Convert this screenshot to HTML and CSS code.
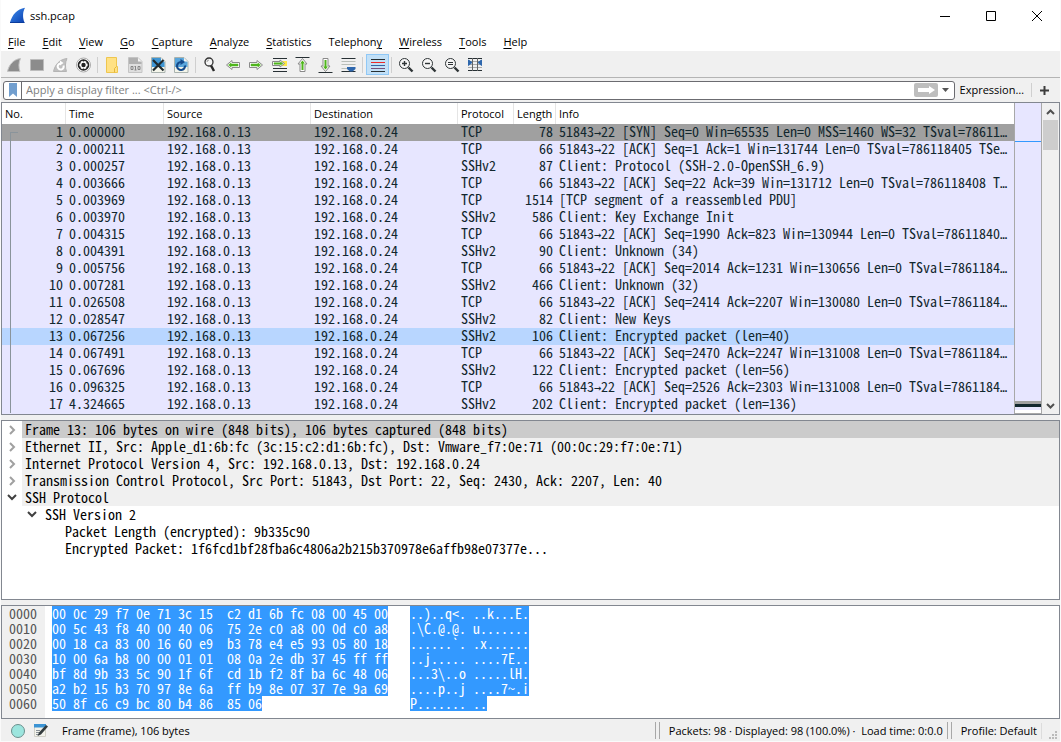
FILE: index.html
```
<!DOCTYPE html>
<html lang="en">
<head>
  <meta charset="UTF-8">
  <meta name="viewport" content="width=device-width, initial-scale=1">
  <title>ssh.pcap</title>
  <link rel="stylesheet" href="styles.css">
</head>
<body>
  <header class="titlebar">
    <svg class="logo" width="18" height="17" viewBox="0 0 18 17"><defs><linearGradient id="fin" x1="0" y1="0" x2="1" y2="1"><stop offset="0" stop-color="#3f8ff0"/><stop offset="1" stop-color="#0a3fae"/></linearGradient></defs><path d="M1 15.500C3 8 8 2 16 .8C13.500 5 13.500 11 15.500 15.500Z" fill="url(#fin)"/><path d="M1 15.500h14.500" stroke="#0b3c9c"/></svg>
    <h1>ssh.pcap</h1>
    <div class="window-buttons">
      <button aria-label="Minimize"><svg width="12" height="12" viewBox="0 0 12 12"><path d="M1 6.500h10" stroke="#000"/></svg></button>
      <button aria-label="Maximize"><svg width="12" height="12" viewBox="0 0 12 12"><path d="M1.500 1.500h9v9h-9z" fill="none" stroke="#000"/></svg></button>
      <button aria-label="Close"><svg width="12" height="12" viewBox="0 0 12 12"><path d="M1 1l10 10M11 1L1 11" stroke="#000"/></svg></button>
    </div>
  </header>

  <nav class="menubar">
    <button><u>F</u>ile</button>
    <button><u>E</u>dit</button>
    <button><u>V</u>iew</button>
    <button><u>G</u>o</button>
    <button><u>C</u>apture</button>
    <button><u>A</u>nalyze</button>
    <button><u>S</u>tatistics</button>
    <button>Telephon<u>y</u></button>
    <button><u>W</u>ireless</button>
    <button><u>T</u>ools</button>
    <button><u>H</u>elp</button>
  </nav>

  <div class="toolbar">
    <button aria-label="Start capture"><svg viewBox="0 0 16 16"><path d="M.5 14.500C2 8 6 2.500 13.500 1.500C11.500 5.500 11.500 10.500 13 14.500Z" fill="#8c8c8c" stroke="#c4c4c4"/></svg></button>
    <button aria-label="Stop capture"><svg viewBox="0 0 16 16"><path d="M.5 2.500h13v11H.5z" fill="#8c8c8c" stroke="#bcbcbc"/></svg></button>
    <button aria-label="Restart capture"><svg viewBox="0 0 16 16"><path d="M.5 14.500C2 8 6 2.500 14 1.500C12 5.500 12 10.500 13.500 14.500Z" fill="#c0c0c0" stroke="#b4b4b4"/><path d="M10.500 8.500a3 3 0 1 1-3-2" fill="none" stroke="#fff" stroke-width="2"/><path d="M7 3.500l3.500 2.500L7 8.500z" fill="#fff"/></svg></button>
    <button aria-label="Capture options"><svg viewBox="0 0 16 16"><circle cx="7.500" cy="8" r="7" fill="#fff" stroke="#aaa"/><circle cx="7.500" cy="8" r="5" fill="none" stroke="#222" stroke-width="1.600"/><circle cx="7.500" cy="8" r="2.200" fill="#222"/><path d="M7.500 3v1.500M7.500 11.500V13M3.200 5.500l1.300.7M10.500 9.800l1.300.7M11.800 5.500l-1.300.7M4.500 9.800l-1.300.7" stroke="#222" stroke-width="1.500"/></svg></button>
    <span class="separator"></span>
    <button aria-label="Open"><svg viewBox="0 0 16 16"><path d="M1.500 .5h10v9h1v6h-11z" fill="#ffe184" stroke="#eec64f"/><path d="M11.500 9.500l-2 2v4" fill="none" stroke="#e4b63b"/></svg></button>
    <button aria-label="Save"><svg viewBox="0 0 16 16"><path d="M.5 .5h9.500l4 4v11H.5z" fill="#dedede" stroke="#c4c4c4"/><path d="M1 1h8.500l4 4v2H1z" fill="#b0b0b0"/><path d="M10 1v3.500h3.500z" fill="#f4f4f4"/><path d="M3 9.500h2v3H3zM10 9.500h2v3h-2zM7.500 9v4M6.500 9.500h1M6.500 13h2" fill="none" stroke="#858585"/></svg></button>
    <button aria-label="Close file"><svg viewBox="0 0 16 16"><path d="M.5 .5h9.500l4 4v11H.5z" fill="#f4f5ea" stroke="#a9b2ae"/><path d="M1 1h8.500l4 4v5H1z" fill="#3f96d4"/><path d="M10 1v3.500h3.500z" fill="#f4f4f4"/><path d="M2 3l10.500 10.500M12.500 3L2 13.500" stroke="#202a2e" stroke-width="2.200"/></svg></button>
    <button aria-label="Reload"><svg viewBox="0 0 16 16"><path d="M.5 .5h9.500l4 4v11H.5z" fill="#f4f5ea" stroke="#a9b2ae"/><path d="M1 1h8.500l4 4v5H1z" fill="#5aa6dc"/><path d="M10 1v3.500h3.500z" fill="#f4f4f4"/><path d="M11 8.500A4 4 0 1 1 7 5" fill="none" stroke="#164a8a" stroke-width="2.200"/><path d="M6.500 2l4.500 3-4.500 3z" fill="#164a8a"/></svg></button>
    <span class="separator"></span>
    <button aria-label="Find"><svg viewBox="0 0 16 16"><circle cx="6" cy="5" r="4" fill="#f5f5f5" stroke="#333" stroke-width="1.300"/><path d="M4 5a2 2 0 0 1 2-2" fill="none" stroke="#999"/><path d="M8 8.500l3 5.500" stroke="#292929" stroke-width="2.500"/></svg></button>
    <button aria-label="Previous"><svg viewBox="0 0 16 16"><path d="M.5 8L6 3.500v2h7.500v5H6v2z" fill="#fff" stroke="#8a8a8a"/><path d="M2.500 8L5 6v1h7v2H5v1z" fill="#4fb51c" stroke="#4fb51c" stroke-width=".5"/></svg></button>
    <button aria-label="Next"><svg viewBox="0 0 16 16"><path d="M13.500 8L8 3.500v2H.5v5H8v2z" fill="#fff" stroke="#8a8a8a"/><path d="M11.500 8L9 6v1H2v2h7v1z" fill="#4fb51c" stroke="#4fb51c" stroke-width=".5"/></svg></button>
    <button aria-label="Go to packet"><svg viewBox="0 0 16 16"><path d="M1 1.500h14M1 11.500h14M1 14.500h14" stroke="#273034"/><path d="M9 4h6v5H9z" fill="#fbe646"/><path d="M12.500 6.500L8 3v1.500H.5v4H8V10z" fill="#fff" stroke="#8a8a8a"/><path d="M11 6.500L8.500 5v.8H2v1.500h6.500V8z" fill="#4fb51c" stroke="#4fb51c" stroke-width=".5"/></svg></button>
    <button aria-label="First packet"><svg viewBox="0 0 16 16"><path d="M.5 .5h14" stroke="#273034"/><path d="M7.500 1.500L3 7h2v7.500h5V7h2z" fill="#fff" stroke="#8a8a8a"/><path d="M7.500 3.500L5 6.500h1.500V13h2V6.500H10z" fill="#4fb51c"/></svg></button>
    <button aria-label="Last packet"><svg viewBox="0 0 16 16"><path d="M.5 15.500h14" stroke="#273034"/><path d="M7.500 14.500L3 9h2V1.500h5V9h2z" fill="#fff" stroke="#8a8a8a"/><path d="M7.500 12.500L5 9.500h1.500V3h2v6.500H10z" fill="#4fb51c"/></svg></button>
    <button aria-label="Auto scroll"><svg viewBox="0 0 16 16"><path d="M.5 1.500h14M.5 14.500h14" stroke="#273034"/><path d="M.5 4.500h14M.5 7.500h14M.5 11.500h7" stroke="#b9beb9"/><path d="M6 10h8.500v2l-3 2.500H9L6 12z" fill="#2e67ad"/></svg></button>
    <span class="separator"></span>
    <button class="checked" aria-label="Colorize" aria-pressed="true"><svg viewBox="0 0 16 16"><path d="M1 2.500h14M1 14.500h14" stroke="#273034"/><path d="M1 5.500h14" stroke="#ef2929"/><path d="M1 8.500h14" stroke="#3465a4"/><path d="M1 11.500h14" stroke="#75507b"/></svg></button>
    <span class="separator"></span>
    <button aria-label="Zoom in"><svg viewBox="0 0 16 16"><circle cx="5.500" cy="6.500" r="5" fill="#f6f6f6" stroke="#2e3436"/><path d="M3 6.500h5M5.500 4v5" stroke="#2e3436" stroke-width="1.400"/><path d="M9.500 10.500l4 4" stroke="#2e3436" stroke-width="2.400"/></svg></button>
    <button aria-label="Zoom out"><svg viewBox="0 0 16 16"><circle cx="5.500" cy="6.500" r="5" fill="#f6f6f6" stroke="#2e3436"/><path d="M3 6.500h5" stroke="#2e3436" stroke-width="1.400"/><path d="M9.500 10.500l4 4" stroke="#2e3436" stroke-width="2.400"/></svg></button>
    <button aria-label="Normal size"><svg viewBox="0 0 16 16"><circle cx="5.500" cy="6.500" r="5" fill="#f6f6f6" stroke="#2e3436"/><path d="M3 5.500h5M3 7.500h5" stroke="#2e3436"/><path d="M9.500 10.500l4 4" stroke="#2e3436" stroke-width="2.400"/></svg></button>
    <button aria-label="Resize columns"><svg viewBox="0 0 16 16"><path d="M0 4.500h14M0 7.500h14M0 10.500h14" stroke="#aaa"/><path d="M0 1.500h14M0 13.500h14" stroke="#273034"/><path d="M4.500 1v13M9.500 1v13" stroke="#666"/><path d="M.5 3v5.500l3.500-3zM13.500 3v5.500l-3.500-3z" fill="#2e67ad" stroke="#2e67ad"/></svg></button>
  </div>

  <div class="filterbar">
    <div class="filter">
      <button class="bookmark" aria-label="Bookmarks"><svg width="8" height="14" viewBox="0 0 8 14"><path d="M0 0h8v14L4 10.500 0 14z" fill="#729fcf"/></svg></button>
      <input type="text" aria-label="Display filter" placeholder="Apply a display filter ... &lt;Ctrl-/&gt;">
      <button class="apply" aria-label="Apply filter"><svg width="24" height="14" viewBox="0 0 24 14"><rect width="24" height="14" rx="2" fill="#bebebe"/><path d="M4 5h11V3l6 4-6 4V9H4z" fill="#fff"/></svg></button>
      <button class="recent" aria-label="Recent filters"><svg width="8" height="4" viewBox="0 0 8 4"><path d="M0 0h7L3.500 4z" fill="#555"/></svg></button>
    </div>
    <button class="expression">Expression…</button>
    <button class="add" aria-label="Add filter button"><svg width="9" height="9" viewBox="0 0 9 9"><path d="M4.500 0v9M0 4.500h9" stroke="#3c3c3c" stroke-width="2"/></svg></button>
  </div>

  <main class="panes">
    <section class="pane packets">
      <table class="packet-list">
        <colgroup><col class="c-no"><col class="c-time"><col class="c-addr"><col class="c-addr"><col class="c-proto"><col class="c-len"><col></colgroup>
        <thead>
          <tr><th>No.</th><th>Time</th><th>Source</th><th>Destination</th><th>Protocol</th><th>Length</th><th>Info</th></tr>
        </thead>
        <tbody>
          <tr class="syn"><td>1</td><td>0.000000</td><td>192.168.0.13</td><td>192.168.0.24</td><td>TCP</td><td>78</td><td>51843<i>→</i>22 [SYN] Seq=0 Win=65535 Len=0 MSS=1460 WS=32 TSval=78611<i>…</i></td></tr>
          <tr><td>2</td><td>0.000211</td><td>192.168.0.13</td><td>192.168.0.24</td><td>TCP</td><td>66</td><td>51843<i>→</i>22 [ACK] Seq=1 Ack=1 Win=131744 Len=0 TSval=786118405 TSe<i>…</i></td></tr>
          <tr><td>3</td><td>0.000257</td><td>192.168.0.13</td><td>192.168.0.24</td><td>SSHv2</td><td>87</td><td>Client: Protocol (SSH-2.0-OpenSSH_6.9)</td></tr>
          <tr><td>4</td><td>0.003666</td><td>192.168.0.13</td><td>192.168.0.24</td><td>TCP</td><td>66</td><td>51843<i>→</i>22 [ACK] Seq=22 Ack=39 Win=131712 Len=0 TSval=786118408 T<i>…</i></td></tr>
          <tr><td>5</td><td>0.003969</td><td>192.168.0.13</td><td>192.168.0.24</td><td>TCP</td><td>1514</td><td>[TCP segment of a reassembled PDU]</td></tr>
          <tr><td>6</td><td>0.003970</td><td>192.168.0.13</td><td>192.168.0.24</td><td>SSHv2</td><td>586</td><td>Client: Key Exchange Init</td></tr>
          <tr><td>7</td><td>0.004315</td><td>192.168.0.13</td><td>192.168.0.24</td><td>TCP</td><td>66</td><td>51843<i>→</i>22 [ACK] Seq=1990 Ack=823 Win=130944 Len=0 TSval=78611840<i>…</i></td></tr>
          <tr><td>8</td><td>0.004391</td><td>192.168.0.13</td><td>192.168.0.24</td><td>SSHv2</td><td>90</td><td>Client: Unknown (34)</td></tr>
          <tr><td>9</td><td>0.005756</td><td>192.168.0.13</td><td>192.168.0.24</td><td>TCP</td><td>66</td><td>51843<i>→</i>22 [ACK] Seq=2014 Ack=1231 Win=130656 Len=0 TSval=7861184<i>…</i></td></tr>
          <tr><td>10</td><td>0.007281</td><td>192.168.0.13</td><td>192.168.0.24</td><td>SSHv2</td><td>466</td><td>Client: Unknown (32)</td></tr>
          <tr><td>11</td><td>0.026508</td><td>192.168.0.13</td><td>192.168.0.24</td><td>TCP</td><td>66</td><td>51843<i>→</i>22 [ACK] Seq=2414 Ack=2207 Win=130080 Len=0 TSval=7861184<i>…</i></td></tr>
          <tr><td>12</td><td>0.028547</td><td>192.168.0.13</td><td>192.168.0.24</td><td>SSHv2</td><td>82</td><td>Client: New Keys</td></tr>
          <tr class="selected"><td>13</td><td>0.067256</td><td>192.168.0.13</td><td>192.168.0.24</td><td>SSHv2</td><td>106</td><td>Client: Encrypted packet (len=40)</td></tr>
          <tr><td>14</td><td>0.067491</td><td>192.168.0.13</td><td>192.168.0.24</td><td>TCP</td><td>66</td><td>51843<i>→</i>22 [ACK] Seq=2470 Ack=2247 Win=131008 Len=0 TSval=7861184<i>…</i></td></tr>
          <tr><td>15</td><td>0.067696</td><td>192.168.0.13</td><td>192.168.0.24</td><td>SSHv2</td><td>122</td><td>Client: Encrypted packet (len=56)</td></tr>
          <tr><td>16</td><td>0.096325</td><td>192.168.0.13</td><td>192.168.0.24</td><td>TCP</td><td>66</td><td>51843<i>→</i>22 [ACK] Seq=2526 Ack=2303 Win=131008 Len=0 TSval=7861184<i>…</i></td></tr>
          <tr><td>17</td><td>4.324665</td><td>192.168.0.13</td><td>192.168.0.24</td><td>SSHv2</td><td>202</td><td>Client: Encrypted packet (len=136)</td></tr>
        </tbody>
      </table>
      <div class="minimap">
        <span class="map-selected"></span>
        <span class="map-gray"></span>
        <span class="map-dark"></span>
        <span class="map-light"></span>
        <span class="map-end"></span>
      </div>
      <div class="scrollbar">
        <button aria-label="Scroll up"><svg width="9" height="6" viewBox="0 0 9 6"><path d="M1 5l3.500-3.500L8 5" fill="none" stroke="#505050" stroke-width="2"/></svg></button>
        <div class="thumb"></div>
        <button aria-label="Scroll down"><svg width="9" height="6" viewBox="0 0 9 6"><path d="M1 1l3.500 3.500L8 1" fill="none" stroke="#505050" stroke-width="2"/></svg></button>
      </div>
    </section>

    <section class="pane details">
      <ul class="tree">
        <li class="root current"><svg class="twisty" viewBox="0 0 10 10"><path d="M3 1l4 4-4 4" stroke="#a0a0a0"/></svg><span>Frame 13: 106 bytes on wire (848 bits), 106 bytes captured (848 bits)</span></li>
        <li class="root"><svg class="twisty" viewBox="0 0 10 10"><path d="M3 1l4 4-4 4" stroke="#a0a0a0"/></svg><span>Ethernet II, Src: Apple_d1:6b:fc (3c:15:c2:d1:6b:fc), Dst: Vmware_f7:0e:71 (00:0c:29:f7:0e:71)</span></li>
        <li class="root"><svg class="twisty" viewBox="0 0 10 10"><path d="M3 1l4 4-4 4" stroke="#a0a0a0"/></svg><span>Internet Protocol Version 4, Src: 192.168.0.13, Dst: 192.168.0.24</span></li>
        <li class="root"><svg class="twisty" viewBox="0 0 10 10"><path d="M3 1l4 4-4 4" stroke="#a0a0a0"/></svg><span>Transmission Control Protocol, Src Port: 51843, Dst Port: 22, Seq: 2430, Ack: 2207, Len: 40</span></li>
        <li class="root"><svg class="twisty" viewBox="0 0 10 10"><path d="M1 2l4 4 4-4" stroke="#404040"/></svg><span>SSH Protocol</span></li>
        <li class="level-1"><svg class="twisty" viewBox="0 0 10 10"><path d="M1 2l4 4 4-4" stroke="#404040"/></svg><span>SSH Version 2</span></li>
        <li class="level-2"><span>Packet Length (encrypted): 9b335c90</span></li>
        <li class="level-2"><span>Encrypted Packet: 1f6fcd1bf28fba6c4806a2b215b370978e6affb98e07377e...</span></li>
      </ul>
    </section>

    <section class="pane bytes">
      <div class="offsets"><span>0000</span><span>0010</span><span>0020</span><span>0030</span><span>0040</span><span>0050</span><span>0060</span></div>
      <div class="hex">
        <span>00 0c 29 f7 0e 71 3c 15  c2 d1 6b fc 08 00 45 00</span>
        <span>00 5c 43 f8 40 00 40 06  75 2e c0 a8 00 0d c0 a8</span>
        <span>00 18 ca 83 00 16 60 e9  b3 78 e4 e5 93 05 80 18</span>
        <span>10 00 6a b8 00 00 01 01  08 0a 2e db 37 45 ff ff</span>
        <span>bf 8d 9b 33 5c 90 1f 6f  cd 1b f2 8f ba 6c 48 06</span>
        <span>a2 b2 15 b3 70 97 8e 6a  ff b9 8e 07 37 7e 9a 69</span>
        <span>50 8f c6 c9 bc 80 b4 86  85 06</span>
      </div>
      <div class="hex">
        <span>..)..q&lt;. ..k...E.</span>
        <span>.\C.@.@. u.......</span>
        <span>......`. .x......</span>
        <span>..j..... ....7E..</span>
        <span>...3\..o .....lH.</span>
        <span>....p..j ....7~.i</span>
        <span>P....... ..</span>
      </div>
    </section>
  </main>

  <footer class="statusbar">
    <button aria-label="Expert information"><svg width="16" height="16" viewBox="0 0 16 16"><circle cx="8" cy="8" r="6.500" fill="#9ce5de" stroke="#6b8f8d"/></svg></button>
    <button aria-label="Capture comment"><svg width="16" height="16" viewBox="0 0 16 16"><path d="M1.500 1.500h11v12h-11z" fill="#f3f3ec" stroke="#d0d0c8"/><path d="M1 1h12v3.500H1z" fill="#3c94d4"/><path d="M3 7.500h4M3 9.500h3M3 11.500h3" stroke="#8a9299"/><path d="M13 2l2 1.500-7 8-3.500 1.500L6 9.500z" fill="#333b3e"/></svg></button>
    <span class="status-text">Frame (frame), 106 bytes</span>
    <span class="handle"></span>
    <span class="status-cell">Packets: 98 · Displayed: 98 (100.0%) ·&nbsp; Load time: 0:0.0</span>
    <span class="handle"></span>
    <span class="status-cell">Profile: Default</span>
    <svg class="grip" width="12" height="12" viewBox="0 0 12 12"><path d="M7 2h2v2H7zM4 5h2v2H4zM7 5h2v2H7zM1 8h2v2H1zM4 8h2v2H4zM7 8h2v2H7z" fill="#bbb"/></svg>
  </footer>
</body>
</html>
```
FILE: styles.css
```
* {
  box-sizing: border-box;
}
body {
  margin: 0;
  min-height: 100vh;
  display: flex;
  flex-direction: column;
  background: #f0f0f0;
  border: 1px solid #fafafa;
  border-top: none;
  color: #000;
  font: 11px/16px "Open Sans", "Noto Sans", sans-serif;
}
button, input {
  font: inherit;
  color: inherit;
  background: none;
  border: none;
  padding: 0;
  margin: 0;
}
button {
  display: flex;
  align-items: center;
  justify-content: center;
}
svg {
  display: block;
  flex: none;
}

/* title and menu */
.titlebar {
  display: flex;
  align-items: center;
  height: 31px;
  padding-left: 8px;
  background: #fff;
}
.titlebar h1 {
  margin: 0 0 0 3px;
  font-size: 11px;
  font-weight: normal;
}
.window-buttons {
  display: flex;
  margin-left: auto;
}
.window-buttons button {
  width: 46px;
  height: 30px;
}
.menubar {
  display: flex;
  gap: 17px;
  height: 21px;
  padding: 2px 8px 0 7px;
  background: #fff;
  border-bottom: 1px solid #f0f0f0;
}
.menubar u {
  text-underline-offset: 2px;
}
.menubar button {
  display: block;
}

/* toolbar */
.toolbar {
  display: flex;
  align-items: flex-start;
  height: 26px;
  padding: 2px 0 0 2px;
  border-bottom: 1px solid #b4b4b4;
}
.toolbar button {
  align-items: flex-start;
  justify-content: flex-start;
  width: 23px;
  height: 21px;
  padding: 3px 0 0 4px;
}
.toolbar svg {
  width: 16px;
  height: 16px;
}
.toolbar .checked {
  padding: 2px 0 0 3px;
  background: #c2e0f7;
  border: 1px solid #90c8f6;
}
.separator {
  width: 1px;
  height: 16px;
  margin: 3px 3px 0 2px;
  background: #cfcfcf;
}

/* display filter */
.filterbar {
  display: flex;
  align-items: center;
  height: 24px;
  padding: 0 3px 0 2px;
}
.filter {
  display: flex;
  flex: 1;
  height: 19px;
  border: 1px solid #6b6b70;
  border-radius: 3px;
  background: #fff;
}
.bookmark {
  width: 18px;
  border-right: 1px solid #6b6b70;
}
.filter input {
  flex: 1;
  min-width: 0;
  padding-left: 4px;
  outline: none;
}
.filter input::placeholder {
  color: #808080;
  opacity: 1;
}
.recent {
  width: 16px;
}
.expression {
  margin: 0 7px 0 5px;
}
.add {
  width: 26px;
  height: 14px;
  border-left: 1px solid #cfcfcf;
}

/* panes */
.panes {
  display: flex;
  flex-direction: column;
  flex: 1;
  gap: 5px;
}
.pane {
  display: flex;
  background: #fff;
  border: 1px solid #828790;
}
.packets,
.details,
.bytes {
  font-family: "Noto Sans Mono CJK SC", "Liberation Mono", monospace;
  font-size: 14px;
}
.packets {
  min-height: 313px;
  background: #e7e6ff;
}
.packet-list {
  flex: 1;
  align-self: flex-start;
  width: 0;
  table-layout: fixed;
  border-collapse: separate;
  border-spacing: 0;
  color: #12272e;
}
.c-no { width: 64px; }
.c-time { width: 98px; }
.c-addr { width: 147px; }
.c-proto { width: 56px; }
.c-len { width: 42px; }
.packet-list th {
  height: 21px;
  padding: 0 3px;
  background: #fff;
  border-right: 1px solid #e5e5e5;
  color: #000;
  font: 11px/16px "Open Sans", "Noto Sans", sans-serif;
  text-align: left;
}
.packet-list th:last-child {
  border-right: none;
}
.packet-list td {
  height: 17px;
  padding: 0 3px;
  line-height: 15px;
  vertical-align: top;
  white-space: nowrap;
}
.packet-list td:nth-child(1),
.packet-list td:nth-child(6) {
  text-align: right;
}
.packet-list i {
  display: inline-block;
  width: 7px;
  font: 12px/12px "DejaVu Sans Mono", monospace;
}
/* line joining the packets of one conversation */
.packet-list td:first-child {
  background: linear-gradient(#8a949b, #8a949b) 8px 0 / 1px 100% no-repeat;
}
.packet-list .syn td:first-child {
  background:
    linear-gradient(#8a949b, #8a949b) 8px 8px / 1px 9px no-repeat,
    linear-gradient(#8a949b, #8a949b) 8px 8px / 8px 1px no-repeat;
}
.syn {
  background: #a0a0a0;
}
.selected {
  background: #b8d6ff;
}
.minimap {
  display: flex;
  flex-direction: column;
  width: 28px;
  background: #e7e6ff;
  border: solid #a8a8a8;
  border-width: 0 1px 1px;
}
.map-selected {
  height: 1px;
  margin: 38px 0 auto;
  background: #3399ff;
}
.map-gray,
.map-dark,
.map-light,
.map-end {
  height: 3px;
}
.map-gray { background: #a0a0a0; }
.map-dark { background: #12272e; }
.map-end { background: #fff; }
.scrollbar {
  display: flex;
  flex-direction: column;
  width: 17px;
  padding: 0 1px;
  background: #f0f0f0;
}
.scrollbar button {
  height: 17px;
}
.thumb {
  height: 30px;
  margin-bottom: auto;
  background: #cdcdcd;
}

.details {
  flex: 1;
}
.tree {
  flex: 1;
  margin: 0;
  padding: 0;
  list-style: none;
  line-height: 17px;
}
.tree li {
  display: flex;
  align-items: center;
  height: 17px;
  white-space: nowrap;
}
.tree span {
  flex: 1;
  padding-left: 3px;
}
.twisty {
  width: 10px;
  height: 10px;
  margin: 0 5px;
  fill: none;
  stroke-width: 2;
}
.root span {
  background: #f0f0f0;
}
.current span {
  background: #cbcbcb;
}
.level-1 { padding-left: 20px; }
.level-2 { padding-left: 60px; }

.bytes {
  height: 114px;
  line-height: 15px;
}
.offsets {
  width: 43px;
  padding-left: 7px;
  background: #f0f0f0;
  color: #555;
}
.offsets span,
.hex span {
  display: block;
  height: 15px;
}
.hex {
  margin-left: 7px;
}
.hex + .hex {
  margin-left: 22px;
}
.hex span {
  width: fit-content;
  background: #3399ff;
  color: #fff;
  white-space: pre;
}

/* status bar */
.statusbar {
  display: flex;
  align-items: center;
  height: 22px;
  padding: 1px 0 0 9px;
}
.statusbar button {
  width: 16px;
  margin-right: 7px;
}
.status-text {
  margin: 0 auto 0 6px;
}
.handle {
  width: 5px;
  height: 17px;
  border: solid #a8a8a8;
  border-width: 0 1px;
}
.status-cell {
  padding: 0 4px 0 9px;
}
.status-cell:nth-last-child(2) {
  border-right: 1px solid #dcdcdc;
}
.grip {
  margin-left: 6px;
  align-self: flex-end;
}
```
